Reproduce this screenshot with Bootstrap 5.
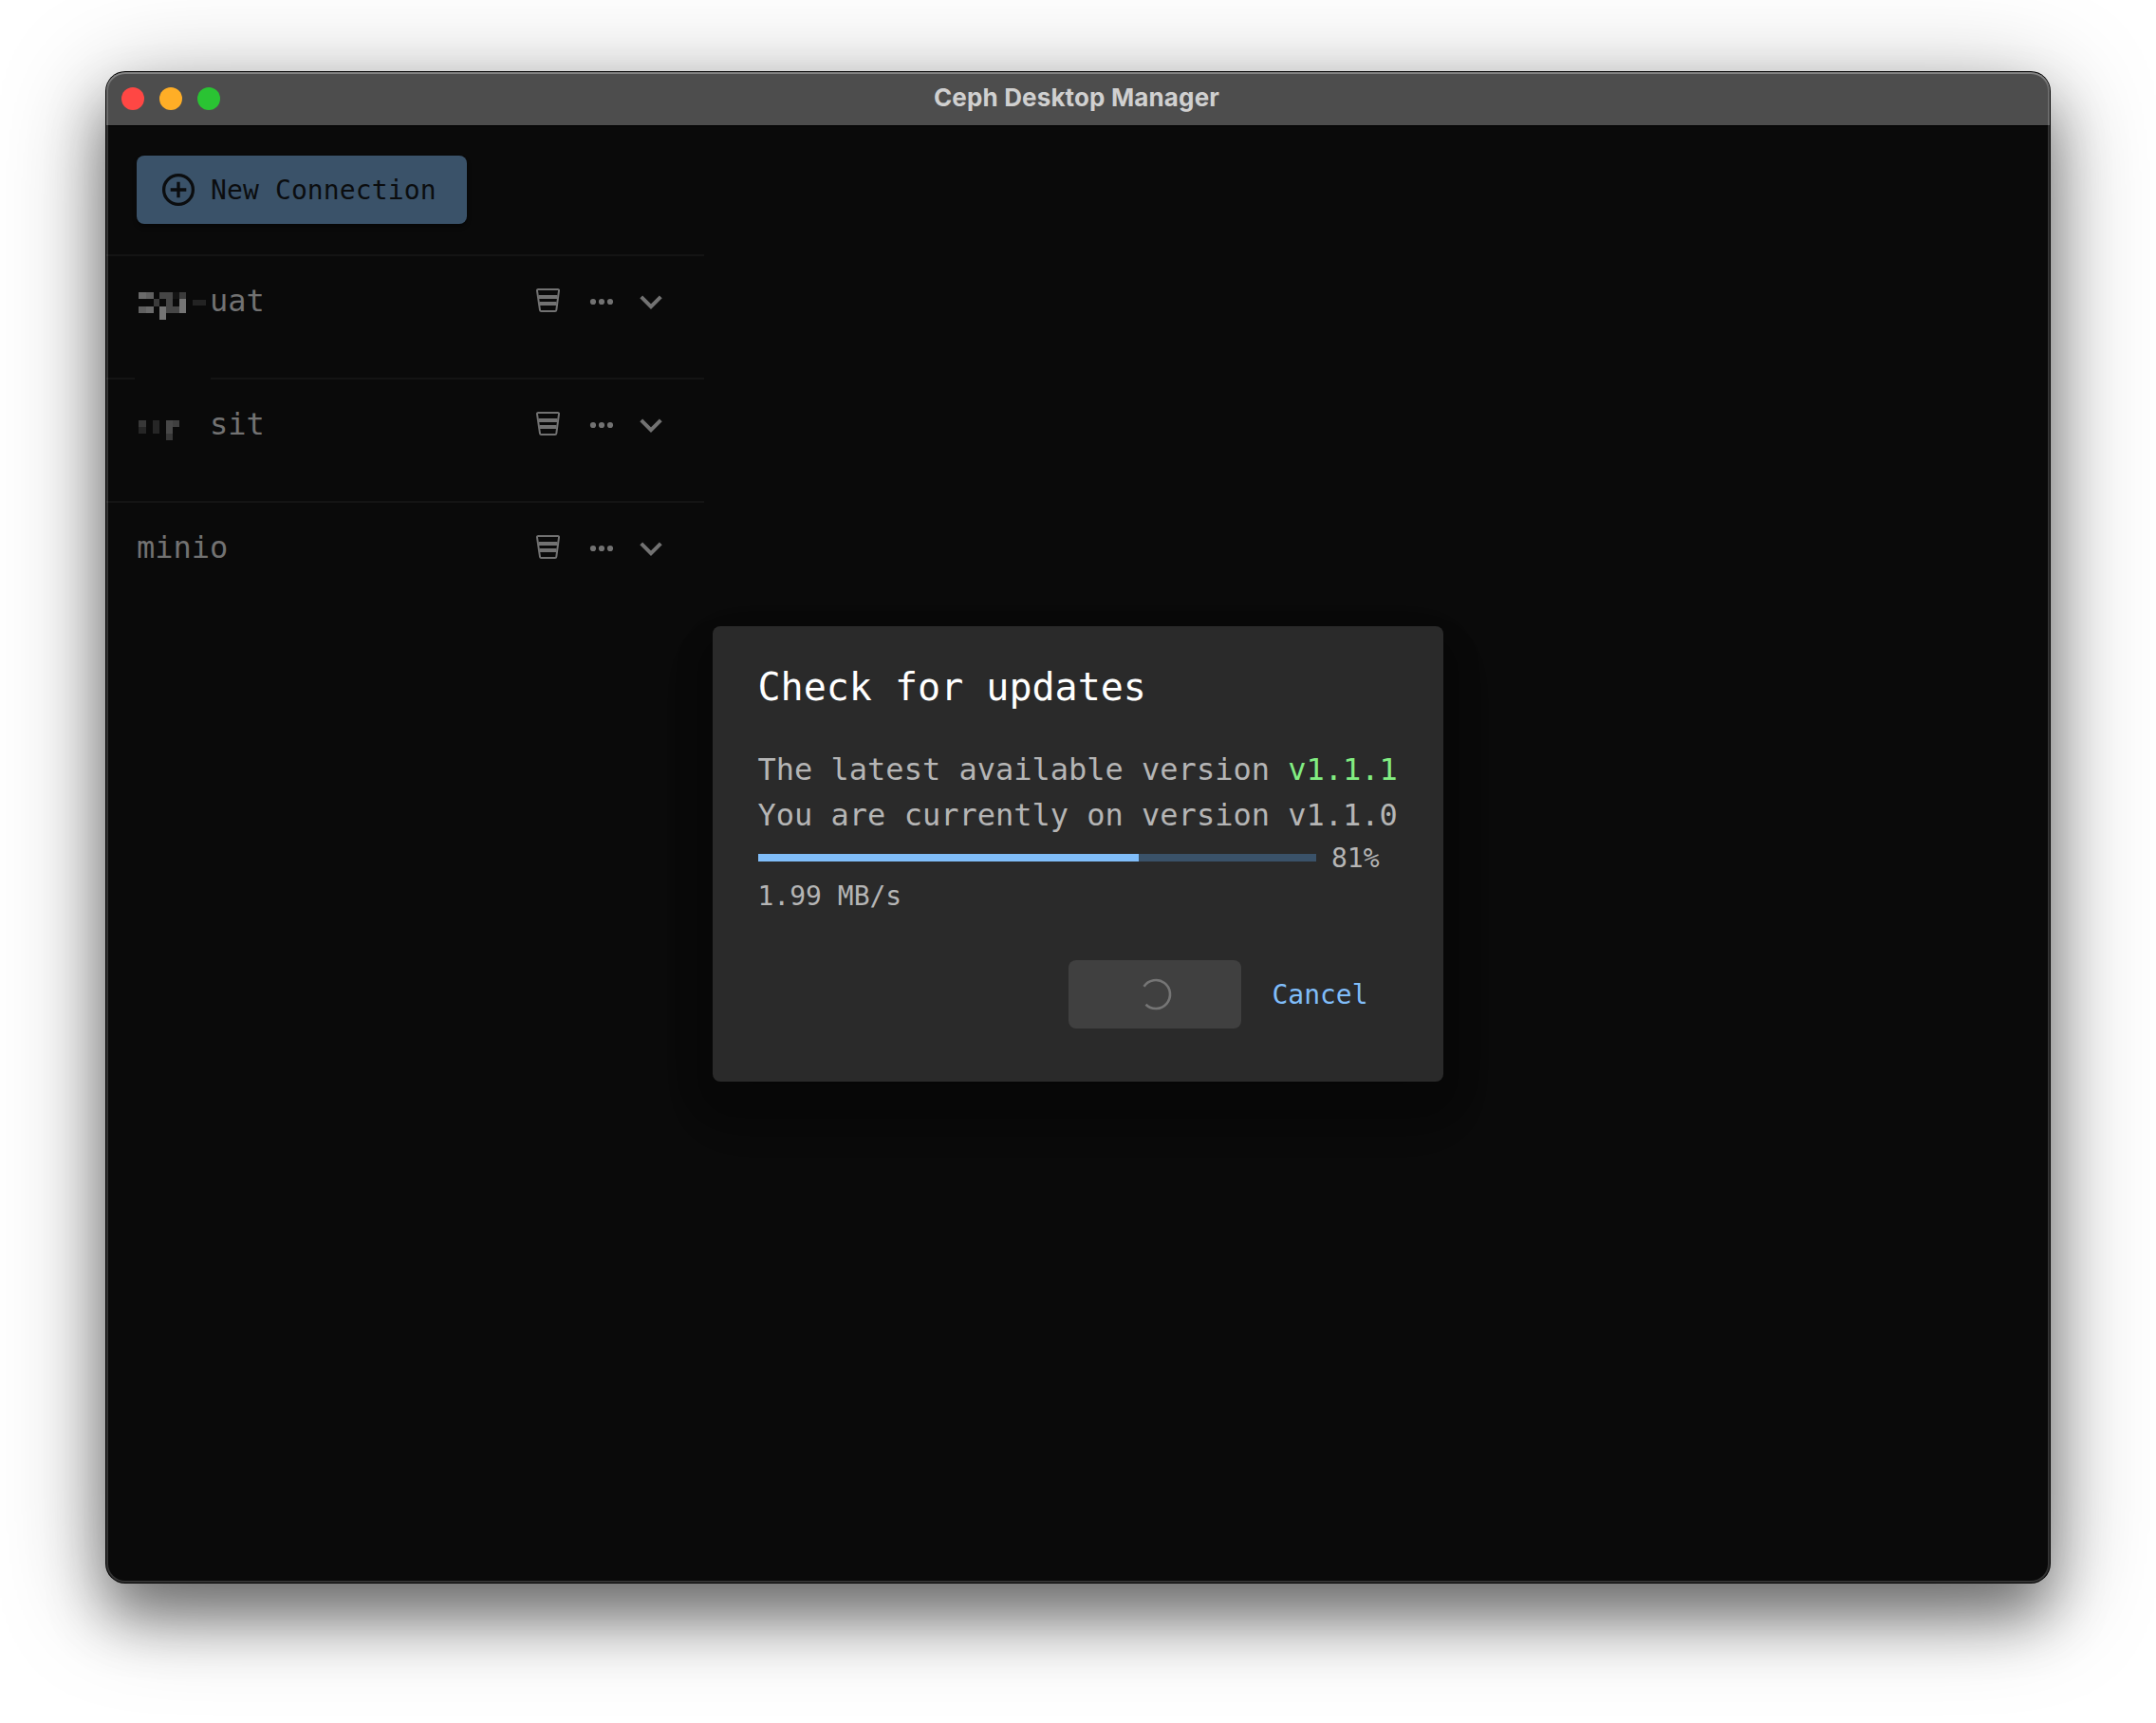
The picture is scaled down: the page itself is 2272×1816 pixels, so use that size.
<!DOCTYPE html>
<html lang="en">
<head>
<meta charset="utf-8">
<title>Ceph Desktop Manager</title>
<link rel="stylesheet" href="https://cdn.jsdelivr.net/npm/bootstrap@5.3.0/dist/css/bootstrap.min.css">
<style>
html, body { height: 100%; }
body { margin: 0; background: #fff; overflow: hidden; font-family: "DejaVu Sans Mono", monospace; }
.desktop { width: 2272px; height: 1816px; padding: 76px 112px 148px; }
.app-window { width: 2048px; height: 1592px; border-radius: 20px; background: #0a0a0a; position: relative;
  box-shadow: 0 0 0 1px #000, 0 36px 60px rgba(0,0,0,.42), 0 20px 110px rgba(0,0,0,.36); }
.window-edge { position: absolute; inset: 0; border-radius: 20px; pointer-events: none;
  box-shadow: inset 0 0 0 2px rgba(255,255,255,.17), inset 0 2px 0 rgba(255,255,255,.16); }
.title-bar { height: 57px; background: #4d4d4d; border-bottom: 1px solid #000; border-radius: 20px 20px 0 0; }
.lights { gap: 16px; padding-left: 16px; width: 300px; }
.light { width: 24px; height: 24px; border-radius: 50%; }
.light-close { background: #ff4744; }
.light-min { background: #ffae26; }
.light-max { background: #2ac333; }
.win-title { font: 700 26px/54px Inter, sans-serif; height: 56px; color: #d0d0d0; letter-spacing: .14px; padding-right: 3px; }
.side { width: 630px; padding-top: 31px; }
.btn-new { margin: 0 0 32px 32px; width: 348px; height: 72px; background: #3a5269; color: #0b0d0f; border-radius: 8px; padding: 0 0 0 25px; font-size: 28px; line-height: 72px; box-shadow: 0 3px 4px rgba(0,0,0,.4); }
.btn-new:hover { background: #3a5269; color: #0b0d0f; }
.btn-new svg { margin-right: 15px; }
.btn-new span { padding-top: 2px; letter-spacing: .12px; }
.conn { height: 130px; border-top: 2px solid #141414; padding: 27px 44px 0 32px; }
.conn-cut { border-image: linear-gradient(90deg, #141414 32px, transparent 32px, transparent 111px, #141414 111px) 2; border-width: 2px 0 0; border-style: solid; }
.conn-line { height: 42px; color: #727272; font-size: 32px; }
.conn-name { line-height: 40px; height: 42px; margin-left: -1px; }
.conn-name:first-child { margin-left: 0; }
.row-icons .ic-bucket { margin: 0 30px 2px 0; }
.row-icons .ic-dots { margin-right: 27px; }
.row-icons .ic-chev { margin-top: 2px; }
.updates { position: absolute; left: 639px; top: 584px; width: 770px; height: 480px; border-radius: 8px; background: #2a2a2a; color: #b5b5b5; padding: 32px 48px 32px 47.500px;
  box-shadow: 0 22px 30px -14px rgba(0,0,0,.2), 0 32px 56px 0 rgba(0,0,0,.11), 0 18px 50px 0 rgba(0,0,0,.08); }
.updates h1 { font-size: 40px; line-height: 64px; margin: 0 0 31px; color: #fff; font-weight: 400; }
.updates p { font-size: 32px; line-height: 48px; margin: 0; white-space: nowrap; }
.ver-new { color: #82ed82; }
.meter { height: 40px; font-size: 28px; line-height: 40px; gap: 16px; margin: 1px 0 0 .5px; }
.meter .progress { width: 588px; height: 8px; border-radius: 0; background: #3a5269; }
.meter .progress-bar { background: #80bdf9; transition: none; }
.meter span { padding-top: 2px; }
.rate { font-size: 28px; line-height: 42px; height: 40px; }
.actions { margin-top: 48px; }
.btn-busy { width: 182px; height: 72px; border-radius: 8px; background: #404040; padding: 0 0 0 2px; }
.btn-cancel { width: 165px; height: 72px; font-size: 28px; line-height: 74px; color: #80bdf9; padding: 0 0 0 1px; border: 0; }
</style>
</head>
<body>
<svg class="d-none">
  <symbol id="bucket" viewBox="0 0 26 26"><path d="M2.200 1H22.800Q24.200 1 24 2.400L21.300 22.800Q21.100 24 19.900 24H5.400Q4.200 24 4 22.800L1 2.400Q.8 1 2.200 1Z" fill="none" stroke="#727272" stroke-width="2"/><path d="M2.500 9h20M3.500 16h18" stroke="#727272" stroke-width="3.800"/></symbol>
  <symbol id="dots" viewBox="0 0 26 8"><g fill="#727272"><circle cx="4" cy="4" r="3.100"/><circle cx="13" cy="4" r="3.100"/><circle cx="22" cy="4" r="3.100"/></g></symbol>
  <symbol id="chev" viewBox="0 0 24 16"><path d="M1.700 1.800 12 12.100 22.300 1.800" fill="none" stroke="#727272" stroke-width="4"/></symbol>
</svg>
<main class="desktop">
  <div class="app-window">
    <header class="title-bar d-flex align-items-center justify-content-between">
      <div class="lights d-flex"><span class="light light-close"></span><span class="light light-min"></span><span class="light light-max"></span></div>
      <div class="win-title">Ceph Desktop Manager</div>
      <div class="lights"></div>
    </header>
    <aside class="side">
      <button class="btn btn-new border-0 d-flex align-items-center"><svg width="38" height="38" viewBox="0 0 38 38" fill="none" stroke="#0b0d0f" stroke-width="3.300"><circle cx="19" cy="19" r="15.400"/><path d="M19 10.700v16.600M10.700 19h16.600"/></svg><span>New Connection</span></button>
      <div class="conn"><div class="conn-line d-flex align-items-center">
        <svg width="78" height="42" shape-rendering="crispEdges">
          <path fill="#6a6a6a" d="M2 11h7.500v7.300H2zM9.500 25.700h8.200v7H9.500z"/>
          <path fill="#606060" d="M9.500 11h8.200v7.300H9.500zM2 25.700h7.500v7H2z"/>
          <path fill="#464646" d="M24 11h13.700v21.700h-7V18.300H24zM37.700 25.700H45v7h-7.300z"/>
          <path fill="#3b3b3b" d="M17.700 18.300H24v7.400h-6.300zM45 11h7v7.300h-7z"/>
          <path fill="#141414" d="M37.700 11H45v7.300h-7.300z"/>
          <path fill="#747474" d="M45 18.300h7v14.400h-7zM24 25.700h6.700V40H24z"/>
          <path fill="#232323" d="M58.700 18.700H73V25H58.700z"/>
        </svg><span class="conn-name">uat</span>
        <span class="row-icons d-flex align-items-center ms-auto"><svg class="ic-bucket" width="26" height="26"><use href="#bucket"/></svg><svg class="ic-dots" width="26" height="8"><use href="#dots"/></svg><svg class="ic-chev" width="24" height="16"><use href="#chev"/></svg></span>
      </div></div>
      <div class="conn conn-cut"><div class="conn-line d-flex align-items-center">
        <svg width="78" height="42" shape-rendering="crispEdges">
          <path fill="#383838" d="M2 16h7.700v7H2zM30.700 30h7v7h-7z"/>
          <path fill="#262626" d="M2 23h7.700v7H2zM17.300 16H24v14h-6.700z"/>
          <path fill="#484848" d="M30.700 16h7v14h-7z"/>
          <path fill="#404040" d="M37.700 16H45v7h-7.300z"/>
        </svg><span class="conn-name">sit</span>
        <span class="row-icons d-flex align-items-center ms-auto"><svg class="ic-bucket" width="26" height="26"><use href="#bucket"/></svg><svg class="ic-dots" width="26" height="8"><use href="#dots"/></svg><svg class="ic-chev" width="24" height="16"><use href="#chev"/></svg></span>
      </div></div>
      <div class="conn"><div class="conn-line d-flex align-items-center">
        <span class="conn-name">minio</span>
        <span class="row-icons d-flex align-items-center ms-auto"><svg class="ic-bucket" width="26" height="26"><use href="#bucket"/></svg><svg class="ic-dots" width="26" height="8"><use href="#dots"/></svg><svg class="ic-chev" width="24" height="16"><use href="#chev"/></svg></span>
      </div></div>
    </aside>
    <section class="updates">
      <h1>Check for updates</h1>
      <p>The latest available version <span class="ver-new">v1.1.1</span></p>
      <p>You are currently on version v1.1.0</p>
      <div class="meter d-flex align-items-center"><div class="progress"><div class="progress-bar" style="width:68.2%"></div></div><span>81%</span></div>
      <div class="rate">1.99 MB/s</div>
      <div class="actions d-flex justify-content-end">
        <button class="btn btn-busy border-0 d-flex align-items-center justify-content-center" aria-label="Downloading"><svg width="36" height="36" viewBox="-18 -18 36 36"><path d="M-12.500-8.300A15 15 0 1 1-10.500 10.700" fill="none" stroke="#757575" stroke-width="2.600"/></svg></button>
        <button class="btn btn-cancel">Cancel</button>
      </div>
    </section>
    <div class="window-edge"></div>
  </div>
</main>
<script src="https://cdn.jsdelivr.net/npm/bootstrap@5.3.0/dist/js/bootstrap.bundle.min.js"></script>
</body>
</html>
